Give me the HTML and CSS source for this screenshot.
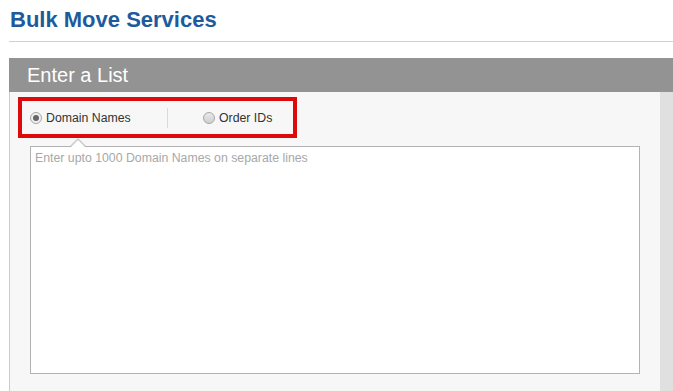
FILE: index.html
```html
<!DOCTYPE html>
<html>
<head>
<meta charset="utf-8">
<link rel="stylesheet" href="styles.css">
</head>
<body>
<div class="page">
  <h1 class="title">Bulk Move Services</h1>
  <div class="rule"></div>
  <div class="card">
    <div class="card-head">Enter a List</div>
    <div class="card-body">
      <div class="card-main">
        <div class="choice">
          <label class="opt opt-first"><span class="radio checked"></span>Domain Names</label>
          <span class="sep"></span>
          <label class="opt"><span class="radio"></span>Order IDs</label>
        </div>
        <div class="field">
          <span class="notch"></span>
          <div class="textarea"><span class="ph">Enter upto 1000 Domain Names on separate lines</span></div>
        </div>
      </div>
      <div class="card-side"></div>
    </div>
  </div>
</div>
</body>
</html>
```
FILE: styles.css
```css
html, body { margin: 0; padding: 0; background: #fff; }
body { font-family: "Liberation Sans", Arial, sans-serif; overflow: hidden; }
.page { padding-left: 9px; }
.title {
  margin: 0;
  padding: 8px 0 0 1px;
  height: 33px;
  box-sizing: border-box;
  font-size: 22px;
  font-weight: bold;
  color: #1d5b9c;
  line-height: 24px;
}
.rule { height: 1px; background: #cfcfcf; margin-top: 8px; }
.card { margin-top: 16px; }
.card-head {
  background: #939393;
  color: #fff;
  font-size: 20px;
  height: 34px;
  line-height: 34px;
  padding-left: 18px;
}
.card-body { display: flex; height: 299px; }
.card-main {
  flex: 1;
  background: #f7f7f7;
  border-left: 1px solid #cccccc;
  padding: 5px 0 0 8px;
}
.card-side { width: 13px; background: #e0e0e0; }
.choice {
  width: 271px;
  height: 33px;
  border: 4px solid #dc0a0a;
  display: flex;
  align-items: center;
  font-size: 12.3px;
  color: #333;
}
.opt { display: flex; align-items: center; }
.opt-first { padding-left: 8px; width: 137px; }
.sep { width: 1px; height: 20px; background: #dadada; margin-right: 35px; }
.radio {
  width: 10px; height: 10px;
  border: 1px solid #a7a7a7;
  border-radius: 50%;
  background: linear-gradient(#e9e9e9, #cfcfcf);
  margin-right: 4px;
  position: relative;
}
.radio.checked { background: #f0f0f0; }
.radio.checked::after {
  content: "";
  position: absolute;
  left: 2px; top: 2px;
  width: 6px; height: 6px;
  border-radius: 50%;
  background: #666;
}
.field { position: relative; margin: 8px 0 0 12px; width: 610px; }
.textarea {
  border: 1px solid #b3b3b3;
  background: #fff;
  padding: 4px 0 0 4px;
  box-sizing: border-box;
  height: 228px;
  font-size: 12.3px;
  color: #a8a8a8;
}
.notch {
  position: absolute;
  left: 40px; top: -8px;
  width: 0; height: 0;
  border-left: 8px solid transparent;
  border-right: 8px solid transparent;
  border-bottom: 8px solid #c9c9c9;
}
.notch::after {
  content: "";
  position: absolute;
  left: -7px; top: 1.5px;
  border-left: 7px solid transparent;
  border-right: 7px solid transparent;
  border-bottom: 7px solid #fff;
}
```
